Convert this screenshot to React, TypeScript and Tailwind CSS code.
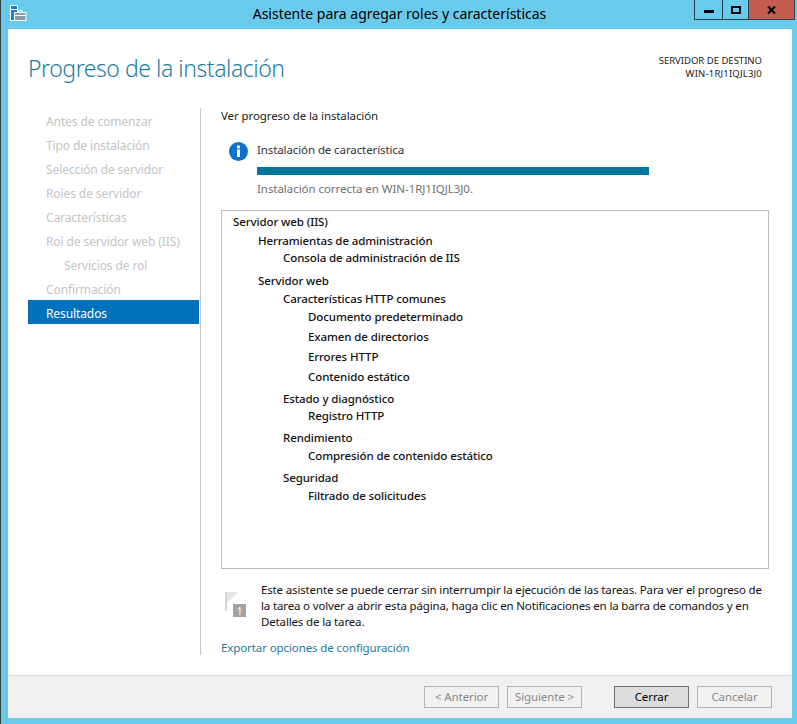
const font = "[font-family:'Noto_Sans','Open_Sans',sans-serif]"

const steps = [
  { label: "Antes de comenzar" },
  { label: "Tipo de instalación" },
  { label: "Selección de servidor" },
  { label: "Roles de servidor" },
  { label: "Características" },
  { label: "Rol de servidor web (IIS)" },
  { label: "Servicios de rol", sub: true },
  { label: "Confirmación" },
  { label: "Resultados", active: true },
]

const tree = [
  { text: "Servidor web (IIS)", cls: "h-[19px] pl-[11px]" },
  { text: "Herramientas de administración", cls: "h-[17px] pl-[36px]" },
  { text: "Consola de administración de IIS", cls: "h-[23px] pl-[61px]" },
  { text: "Servidor web", cls: "h-[18px] pl-[36px]" },
  { text: "Características HTTP comunes", cls: "h-[18px] pl-[61px]" },
  { text: "Documento predeterminado", cls: "h-[20px] pl-[86px]" },
  { text: "Examen de directorios", cls: "h-[20px] pl-[86px]" },
  { text: "Errores HTTP", cls: "h-[20px] pl-[86px]" },
  { text: "Contenido estático", cls: "h-[22px] pl-[86px]" },
  { text: "Estado y diagnóstico", cls: "h-[17px] pl-[61px]" },
  { text: "Registro HTTP", cls: "h-[22px] pl-[86px]" },
  { text: "Rendimiento", cls: "h-[18px] pl-[61px]" },
  { text: "Compresión de contenido estático", cls: "h-[22px] pl-[86px]" },
  { text: "Seguridad", cls: "h-[18px] pl-[61px]" },
  { text: "Filtrado de solicitudes", cls: "h-[18px] pl-[86px]" },
]

function AppIcon() {
  return (
    <svg width="17" height="17" viewBox="0 0 17 17" className="ml-[1px] mt-[5px] shrink-0">
      <path d="M.5.5h7v15h-7z" fill="#1e7fd0" stroke="#fff" />
      <path d="M.5 4.5h7" stroke="#fff" />
      <path d="M4.5 7.5h11.5v8H4.5z" fill="#8a9aa6" stroke="#fff" />
      <path d="M8.5 7.5v-2h3.5v2M4.5 10.5h11.5" fill="none" stroke="#fff" />
    </svg>
  )
}

function FlagIcon() {
  return (
    <svg width="22" height="30" viewBox="0 0 22 30" className="shrink-0">
      <path d="M1 1v19" stroke="#d6d6d6" strokeWidth="2" />
      <path d="M2 1h11L2 12z" fill="#e6e6e6" />
      <rect x="8" y="13" width="13" height="13" fill="#a3a3a3" />
      <text x="14.5" y="23.5" textAnchor="middle" fontSize="10" fill="#fff" fontFamily="Noto Sans, sans-serif">1</text>
    </svg>
  )
}

function WizardButton({ label, primary }: { label: string; primary?: boolean }) {
  return (
    <div
      className={
        primary
          ? "flex h-[22px] w-[75px] items-center justify-center border border-[#6f6f6f] bg-[#dcdcdc] text-black"
          : "flex h-[22px] w-[75px] items-center justify-center border border-[#b4b4b4] bg-[#f0f0f0] text-[#8a8a8a]"
      }
    >
      {label}
    </div>
  )
}

export default function App() {
  return (
    <div className={`${font} flex h-[724px] w-[797px] flex-col overflow-hidden border-l border-[#3a3f42] bg-[#69cbec] text-[11.5px] tracking-[-0.1px]`}>
      <div className="relative flex h-[29px] shrink-0 items-start justify-center">
        <div className="absolute left-[8px] top-0">
          <AppIcon />
        </div>
        <div className="pl-[1px] pt-[4px] text-[14px] leading-[19px] tracking-normal text-black">
          Asistente para agregar roles y características
        </div>
        <div className="absolute right-[2px] top-0 flex h-[20px] border-x border-b border-[#27414d]">
          <div className="flex w-[27px] items-center justify-center">
            <div className="mt-[3px] h-[3px] w-[10px] bg-black" />
          </div>
          <div className="flex w-[26px] items-center justify-center border-l border-[#27414d]">
            <div className="h-[8px] w-[10px] border-2 border-black" />
          </div>
          <div className="flex w-[46px] items-center justify-center border-l border-[#27414d] bg-[#c45c50]">
            <svg width="9" height="8" viewBox="0 0 9 8">
              <path d="M1 .5l7 7M8 .5l-7 7" stroke="#000" strokeWidth="2.2" />
            </svg>
          </div>
        </div>
      </div>

      <div className="ml-[7px] flex w-[784px] flex-1 flex-col bg-white">
        <div className="flex h-[79px] shrink-0 items-start justify-between pl-[20px] pr-[30px]">
          <div className="pt-[20px] text-[23px] font-light leading-[38px] tracking-[-0.46px] text-[#1d7da6]">
            Progreso de la instalación
          </div>
          <div className="pt-[25px] text-right text-[9.5px] leading-[13px] tracking-normal text-[#222]">
            <div>SERVIDOR DE DESTINO</div>
            <div className="tracking-[0.2px]">WIN-1RJ1IQJL3J0</div>
          </div>
        </div>

        <div className="flex h-[547px] shrink-0 pl-[20px]">
          <div className="w-[171px] text-[12px]">
            {steps.map((s) => (
              <div
                key={s.label}
                className={
                  s.active
                    ? "flex h-[24px] items-center bg-[#0071bc] pl-[18px] pt-[3px] text-white"
                    : s.sub
                      ? "flex h-[24px] items-center pl-[36px] pt-[3px] text-[#c4c4c4]"
                      : "flex h-[24px] items-center pl-[18px] pt-[3px] text-[#c4c4c4]"
                }
              >
                {s.label}
              </div>
            ))}
          </div>
          <div className="ml-[1px] h-full w-[1px] bg-[#c8c8c8]" />
          <div className="ml-[20px] flex w-[548px] flex-col">
            <div className="h-[18px] shrink-0 leading-[16px] text-[#222]">Ver progreso de la instalación</div>

            <div className="mt-[14px] flex h-[70px] shrink-0 pl-[8px]">
              <svg width="19" height="19" viewBox="0 0 19 19" className="mt-[2px] shrink-0">
                <circle cx="9.5" cy="9.5" r="9.5" fill="#0d73c9" />
                <rect x="8" y="7.5" width="3" height="7.5" fill="#fff" />
                <rect x="8" y="3.5" width="3" height="2.8" fill="#fff" />
              </svg>
              <div className="ml-[9px] flex w-[392px] flex-col">
                <div className="mt-[1px] h-[18px] leading-[18px] text-[#333]">Instalación de característica</div>
                <div className="mt-[8px] h-[8px] bg-[#00789c]" />
                <div className="mt-[5px] leading-[18px] tracking-[-0.05px] text-[#6f6f6f]">Instalación correcta en WIN-1RJ1IQJL3J0.</div>
              </div>
            </div>

            <div className="h-[359px] shrink-0 border border-[#bdbdbd] pt-[2px] font-medium text-[#111]">
              {tree.map((row) => (
                <div key={row.text} className={`${row.cls} leading-[18px]`}>
                  {row.text}
                </div>
              ))}
            </div>

            <div className="mt-[13px] flex h-[47px] shrink-0">
              <div className="ml-[4px] mt-[9px]">
                <FlagIcon />
              </div>
              <div className="ml-[14px] w-[510px] leading-[16px] tracking-[-0.15px] text-[#111]">
                Este asistente se puede cerrar sin interrumpir la ejecución de las tareas. Para ver el progreso de la tarea o volver a abrir esta página, haga clic en Notificaciones en la barra de comandos y en Detalles de la tarea.
              </div>
            </div>
            <div className="mt-[11px] leading-[16px] text-[#1a7a9c]">Exportar opciones de configuración</div>
          </div>
        </div>

        <div className="mt-[20px] flex flex-1 items-start justify-end border-t border-[#dcdcdc] bg-[#f0f0f0] pr-[20px] pt-[10px]">
          <WizardButton label="< Anterior" />
          <div className="ml-[8px]">
            <WizardButton label="Siguiente >" />
          </div>
          <div className="ml-[32px]">
            <WizardButton label="Cerrar" primary />
          </div>
          <div className="ml-[8px]">
            <WizardButton label="Cancelar" />
          </div>
        </div>
      </div>
      <div className="h-[6px] shrink-0" />
    </div>
  )
}
